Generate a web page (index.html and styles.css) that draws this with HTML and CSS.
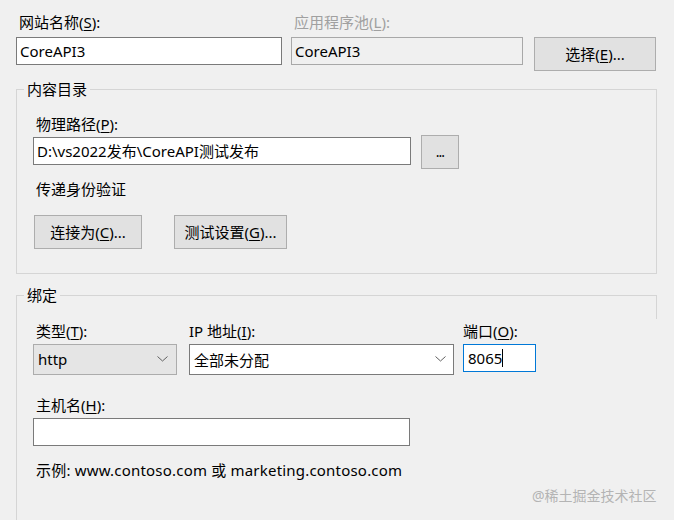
FILE: index.html
```html
<!DOCTYPE html>
<html lang="zh-CN">
<head>
<meta charset="utf-8">
<title>网站设置</title>
<link rel="stylesheet" href="styles.css">
</head>
<body>
<div class="dialog">
  <div class="top-row">
    <div class="field field-site">
      <div class="label">网站名称(<u>S</u>):</div>
      <div class="textbox">CoreAPI3</div>
    </div>
    <div class="field field-pool">
      <div class="label disabled">应用程序池(<u>L</u>):</div>
      <div class="textbox readonly">CoreAPI3</div>
    </div>
    <button class="btn btn-select">选择(<u>E</u>)...</button>
  </div>

  <fieldset class="group group-content">
    <legend>内容目录</legend>
    <div class="label">物理路径(<u>P</u>):</div>
    <div class="path-row">
      <div class="textbox path">D:\vs2022发布\CoreAPI测试发布</div>
      <button class="btn btn-browse">...</button>
    </div>
    <div class="label auth">传递身份验证</div>
    <div class="btn-row">
      <button class="btn btn-connect">连接为(<u>C</u>)...</button>
      <button class="btn btn-test">测试设置(<u>G</u>)...</button>
    </div>
  </fieldset>

  <fieldset class="group group-binding">
    <legend>绑定</legend>
    <div class="binding-row">
      <div class="field field-type">
        <div class="label">类型(<u>T</u>):</div>
        <div class="combo gray">
          <span>http</span>
          <svg class="chev" width="11" height="6" viewBox="0 0 11 6"><polyline points="0.5,0.5 5.5,5 10.5,0.5" fill="none" stroke="#606060" stroke-width="1"/></svg>
        </div>
      </div>
      <div class="field field-ip">
        <div class="label">IP 地址(<u>I</u>):</div>
        <div class="combo white">
          <span>全部未分配</span>
          <svg class="chev" width="11" height="6" viewBox="0 0 11 6"><polyline points="0.5,0.5 5.5,5 10.5,0.5" fill="none" stroke="#606060" stroke-width="1"/></svg>
        </div>
      </div>
      <div class="field field-port">
        <div class="label">端口(<u>O</u>):</div>
        <div class="textbox focused">8065<span class="caret"></span></div>
      </div>
    </div>
    <div class="label host-label">主机名(<u>H</u>):</div>
    <div class="textbox host"></div>
    <div class="label example">示例: www.contoso.com 或 marketing.contoso.com</div>
  </fieldset>
  <div class="watermark">@稀土掘金技术社区</div>
</div>
</body>
</html>
```

FILE: styles.css
```css
html, body {
  margin: 0;
  padding: 0;
  background: #f0f0f0;
  height: 100%;
  overflow: hidden;
}
body {
  font-family: "Noto Sans", "Noto Sans CJK SC", sans-serif;
  font-size: 15px;
  color: #000;
}
u {
  text-decoration: underline;
  text-underline-offset: 2px;
}
.dialog {
  position: relative;
  padding: 11px 0 0 16px;
  width: 642px;
  height: 509px;
}
.label {
  line-height: 22px;
  height: 22px;
  white-space: nowrap;
}
.label.disabled {
  color: #a0a0a0;
}
.top-row {
  display: flex;
  align-items: flex-start;
}
.field-site .label { padding-left: 3px; }
.field-pool { margin-left: 9px; }
.field-pool .label { padding-left: 3px; }
.top-row .label { margin-bottom: 4px; }

.textbox {
  box-sizing: border-box;
  height: 28px;
  border: 1px solid #7a7a7a;
  background: #fff;
  display: flex;
  align-items: center;
  padding: 0 3px 1px 3px;
  white-space: nowrap;
}
.field-site .textbox { width: 266px; }
.field-pool .textbox { width: 232px; }
.textbox.readonly {
  background: #f0f0f0;
  border-color: #a8a8a8;
}
.btn {
  box-sizing: border-box;
  font-family: inherit;
  font-size: 15px;
  color: #000;
  background: #e1e1e1;
  border: 1px solid #adadad;
  border-radius: 0;
  padding: 0 0 1px 0;
  margin: 0;
  display: flex;
  align-items: center;
  justify-content: center;
}
.btn-select {
  width: 122px;
  height: 34px;
  margin-left: 11px;
  margin-top: 26px;
}

.group {
  margin: 0;
  padding: 0 0 0 16px;
  border: 1px solid #d5d5d5;
  min-width: 0;
}
.group legend {
  padding: 0 3px;
  margin-left: -9px;
  line-height: 22px;
  height: 22px;
}
.group-content {
  width: 641px;
  box-sizing: border-box;
  margin-top: 7px;
  padding-top: 13px;
  padding-bottom: 24px;
}
.group-content > .label { padding-left: 3px; }
.path-row {
  display: flex;
  align-items: center;
  height: 34px;
}
.textbox.path {
  width: 378px;
  margin-top: -3px;
}
.btn-browse {
  width: 38px;
  height: 34px;
  margin-left: 10px;
  font-size: 14px;
  letter-spacing: -1px;
}
.label.auth {
  margin-top: 9px;
}
.btn-row {
  display: flex;
  margin-top: 15px;
}
.btn-connect {
  width: 108px;
  height: 34px;
  margin-left: 1px;
}
.btn-test {
  width: 113px;
  height: 34px;
  margin-left: 32px;
}

.group-binding {
  position: relative;
  margin-top: 10px;
  padding-top: 14px;
  width: 641px;
  box-sizing: border-box;
  border-right: none;
  border-bottom: none;
  height: 260px;
}
.group-binding::after {
  content: "";
  position: absolute;
  right: 0;
  top: -10px;
  width: 1px;
  height: 23px;
  background: #d5d5d5;
}
.binding-row {
  display: flex;
  align-items: flex-start;
}
.binding-row .label { margin-bottom: 2px; }
.field-type .label { padding-left: 3px; }
.field-ip { margin-left: 12px; }
.field-port { margin-left: 9px; }
.combo {
  box-sizing: border-box;
  height: 31px;
  display: flex;
  align-items: center;
  justify-content: space-between;
  padding: 0 8px 1px 4px;
  border: 1px solid #7a7a7a;
}
.combo.gray {
  width: 144px;
  background: #e5e5e5;
  border-color: #acacac;
}
.combo.white {
  width: 265px;
  background: #fff;
  padding-left: 4px;
  padding-right: 7px;
}
.chev { display: block; }
.textbox.focused {
  width: 73px;
  border-color: #0078d7;
  padding-left: 4px;
}
.caret {
  display: inline-block;
  width: 1px;
  height: 18px;
  background: #000;
  margin-left: 0;
}
.host-label {
  margin-top: 19px;
  padding-left: 3px;
  margin-bottom: 2px;
}
.textbox.host {
  width: 377px;
}
.label.example {
  margin-top: 13px;
  padding-left: 3px;
  letter-spacing: 0.2px;
}
.watermark {
  position: absolute;
  left: 532px;
  top: 485px;
  font-size: 14px;
  line-height: 22px;
  color: #b4b4b4;
  white-space: nowrap;
}
```
